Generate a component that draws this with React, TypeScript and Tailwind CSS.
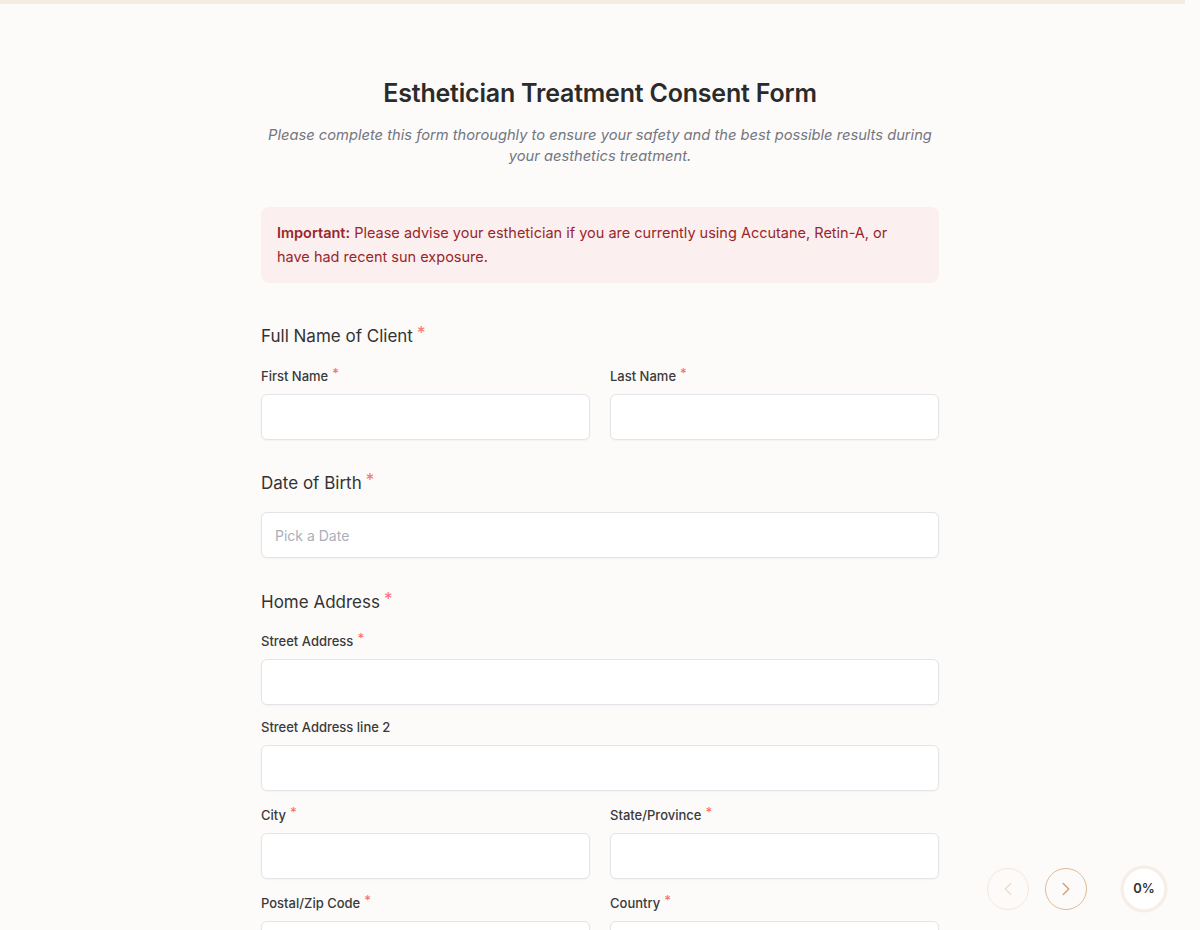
import React from "react";
import { ChevronLeft, ChevronRight } from "lucide-react";

const Req = () => <span className="ml-1 text-[#f87171] relative -top-[3px]">*</span>;

const Label = ({ text, required = true }: { text: string; required?: boolean }) => (
  <label className="block text-[13px] leading-5 font-medium text-[#3a3a3a]">
    {text}
    {required && <Req />}
  </label>
);

const Input = ({ placeholder }: { placeholder?: string }) => (
  <input
    placeholder={placeholder}
    className="mt-2 block w-full h-[46px] rounded-md border border-[#e3e4e8] bg-white px-[13px] text-[14px] text-[#333] placeholder:text-[#a9b0bb] shadow-[0_1px_2px_rgba(0,0,0,0.04)] outline-none"
  />
);

const Field = ({ label, required = true, placeholder }: { label: string; required?: boolean; placeholder?: string }) => (
  <div>
    <Label text={label} required={required} />
    <Input placeholder={placeholder} />
  </div>
);

const Section = ({ title }: { title: string }) => (
  <h2 className="text-[17px] leading-6 text-[#333]">
    {title}
    <Req />
  </h2>
);

export default function App() {
  return (
    <div className="min-h-[930px] bg-[#fcfbfa] font-['Inter',sans-serif] text-[#333]">
      <div className="h-1 w-[1185px] bg-[#f4ebe2]" />

      <div className="mx-auto w-[678px] pb-32">
        <h1 className="mt-[73px] text-center text-[25px] leading-8 font-semibold text-[#2b2b2b] tracking-[-0.2px]">
          Esthetician Treatment Consent Form
        </h1>
        <p className="mt-4 text-center text-[14.7px] leading-[21px] italic text-[#737680]">
          Please complete this form thoroughly to ensure your safety and the best possible results during your aesthetics treatment.
        </p>

        <div className="mt-10 rounded-lg bg-[#fcefef] px-4 py-[14px] text-[14.5px] leading-6 text-[#98262b]">
          <p>
            <strong className="font-semibold">Important:</strong> Please advise your esthetician if you are currently using Accutane, Retin-A, or have had recent sun exposure.
          </p>
        </div>

        <div className="mt-[41px]">
          <Section title="Full Name of Client" />
          <div className="mt-[18px] grid grid-cols-2 gap-5">
            <Field label="First Name" />
            <Field label="Last Name" />
          </div>
        </div>

        <div className="mt-[31px]">
          <Section title="Date of Birth" />
          <input
            placeholder="Pick a Date"
            className="mt-[17px] block w-full h-[46px] rounded-md border border-[#e3e4e8] bg-white px-[13px] text-[14px] placeholder:text-[#a9b0bb] shadow-[0_1px_2px_rgba(0,0,0,0.04)] outline-none"
          />
        </div>

        <div className="mt-8">
          <Section title="Home Address" />
          <div className="mt-[17px]">
            <Field label="Street Address" />
          </div>
          <div className="mt-3">
            <Field label="Street Address line 2" required={false} />
          </div>
          <div className="mt-[14px] grid grid-cols-2 gap-5">
            <Field label="City" />
            <Field label="State/Province" />
          </div>
          <div className="mt-[14px] grid grid-cols-2 gap-5">
            <Field label="Postal/Zip Code" />
            <Field label="Country" />
          </div>
        </div>
      </div>

      <div className="fixed right-[32px] bottom-[17px] flex items-center">
        <button className="flex h-[42px] w-[42px] items-center justify-center rounded-full border border-[#f5e6d8] text-[#f0dcc8]">
          <ChevronLeft size={22} strokeWidth={1.5} />
        </button>
        <button className="ml-4 flex h-[42px] w-[42px] items-center justify-center rounded-full border-[1.5px] border-[#e2b994] text-[#d9a274]">
          <ChevronRight size={22} strokeWidth={1.7} />
        </button>
        <div className="relative ml-[33px] flex h-[48px] w-[48px] items-center justify-center rounded-full bg-white">
          <svg className="absolute inset-0" width="48" height="48" viewBox="0 0 48 48">
            <circle cx="24" cy="24" r="22" fill="none" stroke="#f6efe7" strokeWidth="3.5" />
          </svg>
          <span className="relative text-[13px] font-semibold text-[#333]">0%</span>
        </div>
      </div>
    </div>
  );
}
